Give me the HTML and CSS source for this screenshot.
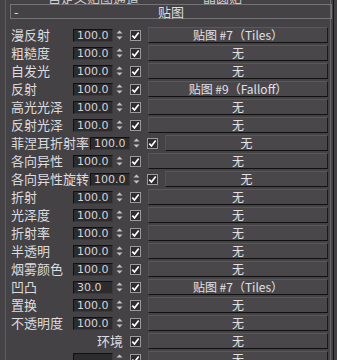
FILE: index.html
```html
<!DOCTYPE html>
<html>
<head>
<meta charset="utf-8">
<link rel="stylesheet" href="styles.css">
</head>
<body>
<div class="frame">
  <div class="panel">
    <div class="topclip"><span class="tc1">自定义贴图通道</span><span class="tc2">▪ 晶圆贴</span></div>
    <div class="header"><span class="dash">-</span><span class="title">贴图</span><span></span></div>
    <div class="rows" id="rows"></div>
  </div>
  <div class="gap"></div>
  <div class="sb"></div>
</div>
<script>
const data = [
  ["漫反射","100.0","贴图 #7（Tiles）"],
  ["粗糙度","100.0","无"],
  ["自发光","100.0","无"],
  ["反射","100.0","贴图 #9（Falloff）"],
  ["高光光泽","100.0","无"],
  ["反射光泽","100.0","无"],
  ["菲涅耳折射率","100.0","无"],
  ["各向异性","100.0","无"],
  ["各向异性旋转","100.0","无"],
  ["折射","100.0","无"],
  ["光泽度","100.0","无"],
  ["折射率","100.0","无"],
  ["半透明","100.0","无"],
  ["烟雾颜色","100.0","无"],
  ["凹凸","30.0","贴图 #7（Tiles）"],
  ["置换","100.0","无"],
  ["不透明度","100.0","无"],
  ["环境",null,"无"],
  ["","","无"]
];
const spin = '<svg class="spin" width="9" height="12" viewBox="0 0 9 12"><path d="M1.5 4.5 L4.5 1.5 L7.5 4.5 Z" fill="#c4c2c5"/><path d="M1.5 7.5 L4.5 10.5 L7.5 7.5 Z" fill="#c4c2c5"/></svg>';
const chk = '<svg class="chk" width="11" height="11" viewBox="0 0 11 11"><rect x="0.5" y="0.5" width="10" height="10" fill="#2e2c2f" stroke="#9c9a9d"/><path d="M2.3 5.6 L4.5 8 L8.7 2.6" fill="none" stroke="#ffffff" stroke-width="1.7"/></svg>';
const rows = document.getElementById('rows');
let html = '';
for (const [l, v, m] of data) {
  if (v === null) {
    html += '<div class="row"><span class="lbl env">' + l + '</span>' + chk + '<div class="map">' + m + '</div></div>';
  } else {
    html += '<div class="row"><span class="lbl">' + l + '</span><span class="num">' + v + '</span>' + spin + chk + '<div class="map">' + m + '</div></div>';
  }
}
rows.innerHTML = html;
</script>
</body>
</html>
```
FILE: styles.css
```css
html, body {
  margin: 0;
  padding: 0;
}
body {
  background: #444245;
  width: 337px;
  height: 360px;
  overflow: hidden;
  font-family: "Noto Sans CJK SC", sans-serif;
  color: #dedcdf;
}
.frame {
  display: flex;
  height: 360px;
}
.panel {
  margin-left: 5px;
  width: 324px;
  border-left: 1px solid #5e5c5f;
  border-right: 1px solid #6a686b;
}
.gap {
  width: 2px;
}
.sb {
  flex: 1;
  border-left: 1px solid #161516;
}
.topclip {
  height: 4px;
  overflow: hidden;
  display: flex;
  align-items: flex-end;
  font-size: 13px;
  line-height: 12px;
  color: #cfcdd0;
}
.tc1 {
  margin-left: 42px;
}
.tc2 {
  margin-left: 48px;
}
.header {
  margin: 0 -2px 8px 4px;
  height: 13px;
  border: 1px solid #767477;
  display: grid;
  grid-template-columns: 1fr auto 1fr;
  align-items: center;
  font-size: 13px;
  line-height: 13px;
}
.dash {
  padding-left: 3px;
}
.rows {
  display: flex;
  flex-direction: column;
  gap: 2px;
  padding-left: 5px;
  padding-right: 2px;
}
.row {
  display: flex;
  align-items: center;
  height: 16px;
}
.lbl {
  min-width: 61px;
  margin-right: 1px;
  font-size: 13px;
  line-height: 16px;
  white-space: nowrap;
}
.lbl.env {
  width: 112px;
  min-width: 112px;
  text-align: right;
}
.num {
  box-sizing: border-box;
  width: 40px;
  height: 13px;
  background: #2c2b2d;
  border-top: 1px solid #111;
  border-left: 1px solid #111;
  border-bottom: 1px solid #3a393b;
  border-right: 1px solid #3a393b;
  font-family: "DejaVu Sans", sans-serif;
  font-size: 11px;
  line-height: 11px;
  padding-left: 3px;
  color: #d6d4d7;
}
.spin {
  display: block;
  margin-left: 2px;
}
.chk {
  display: block;
  margin-left: 6px;
}
.map {
  flex: 1;
  margin-left: 7px;
  box-sizing: border-box;
  height: 16px;
  background: #4a474b;
  border-top: 1px solid #5b585c;
  border-left: 1px solid #555256;
  border-bottom: 1px solid #121112;
  border-right: 1px solid #1a191a;
  font-size: 12px;
  line-height: 14px;
  text-align: center;
  color: #e2e0e3;
  white-space: nowrap;
}
```
